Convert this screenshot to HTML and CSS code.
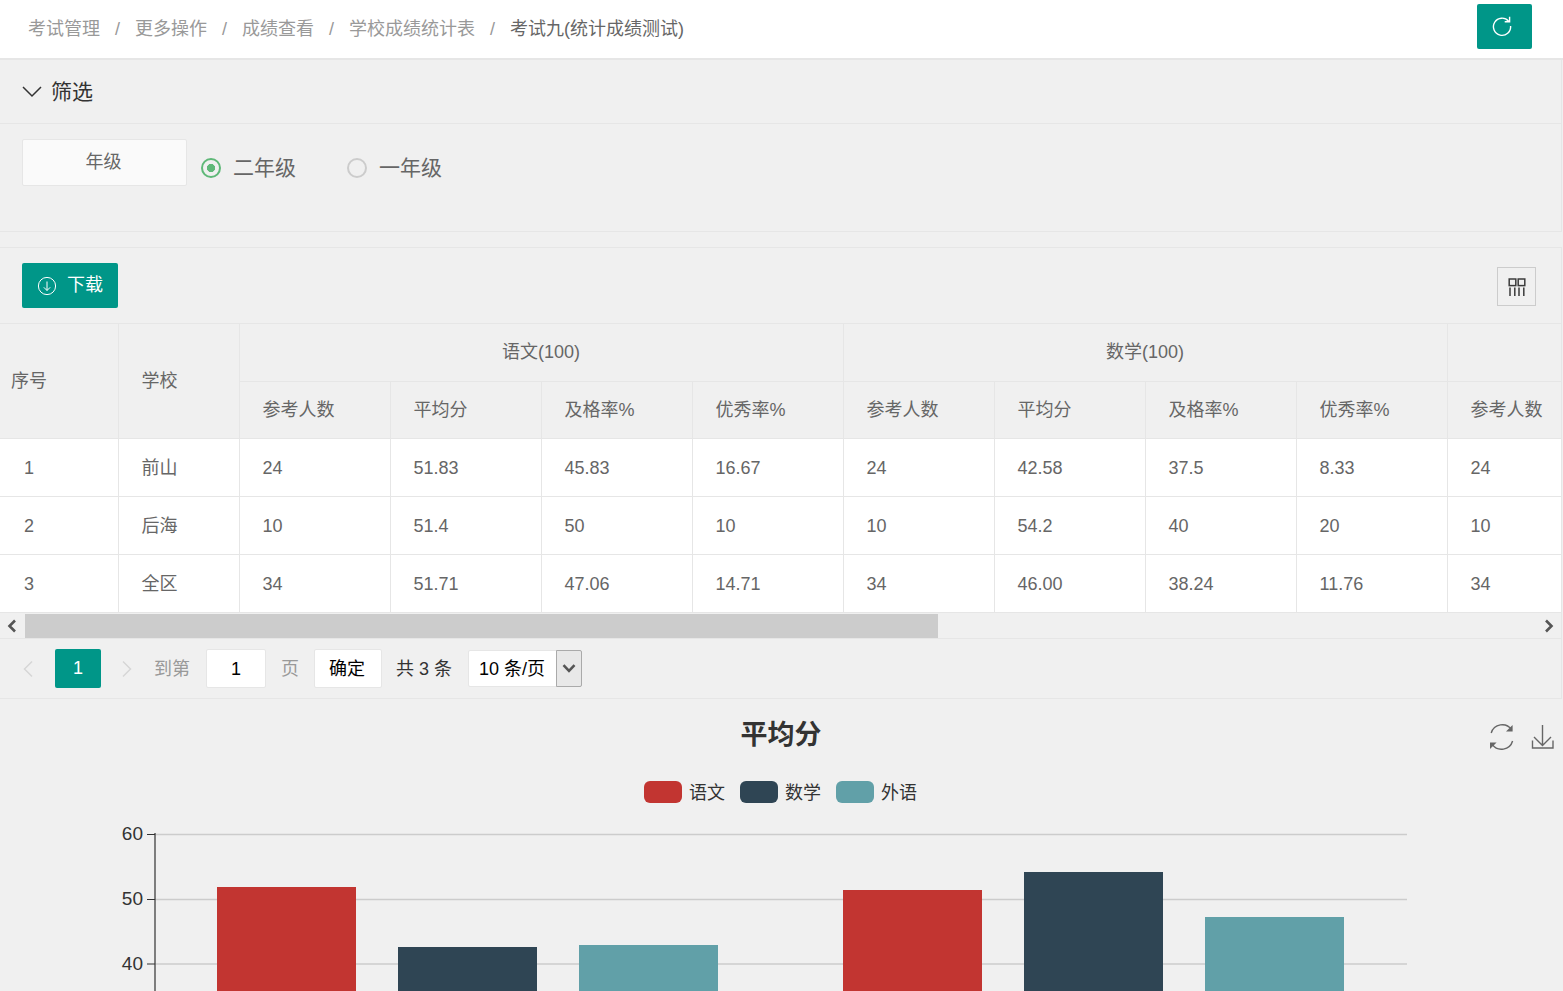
FILE: index.html
```html
<!DOCTYPE html>
<html lang="zh">
<head>
<meta charset="utf-8">
<title>考试九(统计成绩测试)</title>
<link rel="stylesheet" href="styles.css">
</head>
<body>
<header class="topbar">
  <nav class="crumbs">
    <a>考试管理</a><i>/</i><a>更多操作</a><i>/</i><a>成绩查看</a><i>/</i><a>学校成绩统计表</a><i>/</i><b>考试九(统计成绩测试)</b>
  </nav>
  <button class="btn refresh" aria-label="刷新">
    <svg width="22" height="22" viewBox="0 0 22 22" fill="none" stroke="#fff" stroke-width="1.4"><path d="M17.6 6.2A8.6 8.6 0 1 0 19.6 11"/><path d="M18.6 1.8v4.9h-4.9"/></svg>
  </button>
</header>

<section class="panel filter">
  <div class="filter-title">
    <svg width="20" height="14" viewBox="0 0 20 14" fill="none" stroke="#333" stroke-width="1.5"><path d="M1 2l9 9 9-9"/></svg>
    <span>筛选</span>
  </div>
  <div class="filter-body">
    <div class="field-label">年级</div>
    <label class="radio on"><span class="dot"></span>二年级</label>
    <label class="radio"><span class="dot"></span>一年级</label>
  </div>
</section>

<section class="panel data">
  <div class="toolbar">
    <button class="btn download">
      <svg width="20" height="20" viewBox="0 0 20 20" fill="none" stroke="#fff" stroke-width="1"><circle cx="10" cy="10" r="8.6"/><path d="M10 5.5v9M6.8 11.3l3.2 3.2 3.2-3.2"/></svg>
      <span>下载</span>
    </button>
    <button class="cols" aria-label="筛选列">
      <svg width="18" height="18" viewBox="0 0 18 18" fill="none" stroke="#3b3b3b" stroke-width="1.5"><rect x="1.2" y="1" width="6.6" height="6.6"/><rect x="10.2" y="1" width="6.6" height="6.6"/><path d="M2 9.5V18M6.8 9.5V18M11 9.5V18M15.8 9.5V18"/></svg>
    </button>
  </div>
  <div class="table-clip">
    <table>
      <colgroup><col class="c-no"><col class="c-sc"><col class="c-n" span="9"></colgroup>
      <thead>
        <tr><th rowspan="2" class="first">序号</th><th rowspan="2">学校</th><th colspan="4" class="group">语文(100)</th><th colspan="4" class="group">数学(100)</th><th class="group"></th></tr>
        <tr class="sub"><th>参考人数</th><th>平均分</th><th>及格率%</th><th>优秀率%</th><th>参考人数</th><th>平均分</th><th>及格率%</th><th>优秀率%</th><th>参考人数</th></tr>
      </thead>
      <tbody>
        <tr><td class="no">1</td><td>前山</td><td class="lead">24</td><td>51.83</td><td>45.83</td><td>16.67</td><td>24</td><td>42.58</td><td>37.5</td><td>8.33</td><td>24</td></tr>
        <tr><td class="no">2</td><td>后海</td><td class="lead">10</td><td>51.4</td><td>50</td><td>10</td><td>10</td><td>54.2</td><td>40</td><td>20</td><td>10</td></tr>
        <tr><td class="no">3</td><td>全区</td><td class="lead">34</td><td>51.71</td><td>47.06</td><td>14.71</td><td>34</td><td>46.00</td><td>38.24</td><td>11.76</td><td>34</td></tr>
      </tbody>
    </table>
  </div>
  <div class="hscroll">
    <span class="arrow"><svg width="12" height="14" viewBox="0 0 12 14" fill="none" stroke="#555" stroke-width="2.6"><path d="M9 1.5L3.5 7 9 12.5"/></svg></span>
    <div class="track"><div class="thumb"></div></div>
    <span class="arrow right"><svg width="12" height="14" viewBox="0 0 12 14" fill="none" stroke="#555" stroke-width="2.6"><path d="M3 1.5L8.5 7 3 12.5"/></svg></span>
  </div>
  <div class="pager">
    <svg class="chev" width="12" height="18" viewBox="0 0 12 18" fill="none" stroke="#d6d6d6" stroke-width="1.5"><path d="M10 1.5L2.5 9l7.5 7.5"/></svg>
    <span class="cur">1</span>
    <svg class="chev next" width="12" height="18" viewBox="0 0 12 18" fill="none" stroke="#d6d6d6" stroke-width="1.5"><path d="M2 1.5L9.5 9 2 16.5"/></svg>
    <span class="muted goto">到第</span>
    <span class="box num">1</span>
    <span class="muted page">页</span>
    <span class="box ok">确定</span>
    <span class="total">共 3 条</span>
    <span class="select"><span class="sel-text">10 条/页</span><span class="sel-btn"><svg width="14" height="9" viewBox="0 0 14 9" fill="none" stroke="#555" stroke-width="2.6"><path d="M1.5 1.2L7 6.8l5.5-5.6"/></svg></span></span>
  </div>
</section>

<section class="chart">
  <svg class="plot" width="1562" height="292" viewBox="0 699 1562 292">
    <text class="title" x="781" y="744">平均分</text>
    <g class="tools" fill="none" stroke="#666" stroke-width="1.4">
      <path d="M1491.2 733a11.5 11.5 0 0 1 20.4-3.4"/><path d="M1512.6 725v6.6h-6.6" fill="#666" stroke="none"/>
      <path d="M1512.6 741a11.5 11.5 0 0 1-20.4 3.4"/><path d="M1490 749v-6.6h6.6" fill="#666" stroke="none"/>
      <path d="M1542.5 725v20M1534 737l8.5 8.5 8.5-8.5M1532.5 740.5v7.5h20.5v-7.5"/>
    </g>
    <g class="legend">
      <rect x="644" y="781" width="38" height="22" rx="6" fill="#c23531"/><text x="689" y="799">语文</text>
      <rect x="740" y="781" width="38" height="22" rx="6" fill="#2f4554"/><text x="785" y="799">数学</text>
      <rect x="836" y="781" width="38" height="22" rx="6" fill="#61a0a8"/><text x="881" y="799">外语</text>
    </g>
    <g stroke="#ccc" stroke-width="1.4">
      <path d="M155 834.5H1407M155 899.5H1407M155 964H1407"/>
    </g>
    <g stroke="#333" stroke-width="1.2" fill="none">
      <path d="M155 833v160M147 834.5h8M147 899.5h8M147 964h8"/>
    </g>
    <g class="ticks">
      <text x="143" y="840">60</text><text x="143" y="905">50</text><text x="143" y="970">40</text>
    </g>
    <rect x="217" y="887" width="139" height="110" fill="#c23531"/>
    <rect x="398" y="947" width="139" height="50" fill="#2f4554"/>
    <rect x="579" y="945" width="139" height="52" fill="#61a0a8"/>
    <rect x="843" y="890" width="139" height="107" fill="#c23531"/>
    <rect x="1024" y="872" width="139" height="125" fill="#2f4554"/>
    <rect x="1205" y="917" width="139" height="80" fill="#61a0a8"/>
  </svg>
</section>
</body>
</html>
```

FILE: styles.css
```css
* { box-sizing: border-box; }
html, body { margin: 0; height: 991px; overflow: hidden; }
body {
  background: #f0f0f0;
  color: #666;
  font: 18px/1.4 "Liberation Sans", "Noto Sans CJK SC", sans-serif;
  width: 1563px;
}
button { border: 0; padding: 0; cursor: pointer; font: inherit; }

.topbar {
  height: 60px;
  background: #fff;
  border-bottom: 2px solid #e6e6e6;
  display: flex;
  justify-content: space-between;
  align-items: flex-start;
  padding: 4px 31px 0 28px;
}
.crumbs { display: flex; margin-top: 13px; color: #999; line-height: 25px; white-space: nowrap; }
.crumbs i { font-style: normal; margin: 0 15px; width: 5px; }
.crumbs b { font-weight: 400; color: #666; }

.btn { background: #009688; border-radius: 2px; color: #fff; display: flex; align-items: center; }
.refresh { width: 55px; height: 45px; justify-content: center; padding: 0 5px 2px 0; }

.panel { width: 1562px; border-right: 1px solid #e6e6e6; }
.filter { height: 172px; border-bottom: 1px solid #e6e6e6; }
.filter-title {
  height: 64px;
  border-bottom: 1px solid #e6e6e6;
  display: flex;
  align-items: center;
  gap: 9px;
  padding: 0 0 0 22px;
  color: #333;
  font-size: 21px;
}
.filter-body { display: flex; align-items: flex-start; padding: 15px 0 0 22px; }
.field-label {
  width: 165px;
  height: 47px;
  background: #fafafa;
  border: 1px solid #e6e6e6;
  border-radius: 2px;
  padding-right: 2px;
  text-align: center;
  line-height: 45px;
}
.radio { display: flex; align-items: center; gap: 12px; font-size: 21px; height: 30px; margin: 14px 0 0 14px; width: 146px; }
.radio + .radio { margin-left: 0; }
.dot { width: 20px; height: 20px; border-radius: 50%; border: 2px solid #ccc; flex: none; }
.on .dot { border-color: #5fb878; background: radial-gradient(circle, #5fb878 0 3.8px, transparent 4.4px); }

.data { margin-top: 15px; border-top: 1px solid #e6e6e6; height: 452px; border-bottom: 1px solid #e6e6e6; }
.toolbar { height: 76px; display: flex; justify-content: space-between; align-items: flex-start; padding: 15px 25px 0 22px; border-bottom: 1px solid #e6e6e6; }
.download { width: 96px; height: 45px; padding-left: 15px; gap: 10px; }
.cols { width: 39px; height: 39px; margin-top: 4px; background: transparent; border: 1px solid #ccc; display: flex; align-items: center; justify-content: center; }

.table-clip { overflow: hidden; height: 290px; }
table { border-collapse: collapse; table-layout: fixed; width: 1598px; }
.c-no { width: 118px; }
.c-sc { width: 121px; }
.c-n { width: 151px; }
th, td { border: 1px solid #e6e6e6; font-weight: 400; text-align: left; padding: 1px 0 0 23px; color: #666; }
th.first { border-left: 0; padding-left: 11px; }
thead tr:first-child th { height: 57px; border-top: 0; }
thead tr.sub th { height: 57px; padding-top: 3px; }
thead tr:first-child th[rowspan] { height: 114px; }
th.group { text-align: center; padding: 0; }
tbody td { background: #fff; height: 58px; padding-top: 3px; }
tbody td.no { padding-left: 24px; border-left: 0; }

.hscroll { display: flex; height: 25px; border-bottom: 1px solid #e6e6e6; }
.arrow { width: 25px; display: flex; align-items: center; justify-content: center; flex: none; padding-right: 2px; }
.arrow.right { padding: 0 0 0 1px; }
.track { flex: 1; }
.thumb { width: 913px; height: 24px; background: #ccc; }

.pager { height: 59px; display: flex; align-items: center; padding: 0 0 0 22px; }
.chev { flex: none; }
.cur { width: 46px; height: 39px; margin-left: 21px; background: #009688; color: #fff; border-radius: 2px; text-align: center; line-height: 39px; }
.next { margin-left: 20px; }
.muted { color: #999; padding-top: 2px; }
.goto { margin-left: 21px; }
.box { height: 39px; background: #fff; border: 1px solid #e6e6e6; border-radius: 2px; text-align: center; line-height: 39px; color: #000; }
.num { width: 60px; margin-left: 16px; }
.page { margin-left: 15px; }
.ok { width: 68px; margin-left: 15px; padding-right: 2px; }
.total { margin-left: 14px; color: #333; width: 57px; white-space: nowrap; padding-top: 2px; }
.select { margin-left: 15px; display: flex; height: 37px; width: 114px; background: #fff; border-radius: 2px; border: 1px solid #e6e6e6; color: #000; line-height: 37px; }
.sel-text { width: 87px; padding-left: 10px; white-space: nowrap; }
.sel-btn { flex: 1; background: #e8e8e8; border: 1px solid #aaa; border-radius: 0 2px 2px 0; display: flex; align-items: center; justify-content: center; margin: -1px -1px -1px 0; }

.chart { height: 292px; }
.plot { display: block; font-family: "Liberation Sans", "Noto Sans CJK SC", sans-serif; }
.title { font-size: 27px; font-weight: 700; fill: #333; text-anchor: middle; }
.legend text { font-size: 18px; fill: #333; }
.ticks text { font-size: 19px; fill: #333; text-anchor: end; }
```
